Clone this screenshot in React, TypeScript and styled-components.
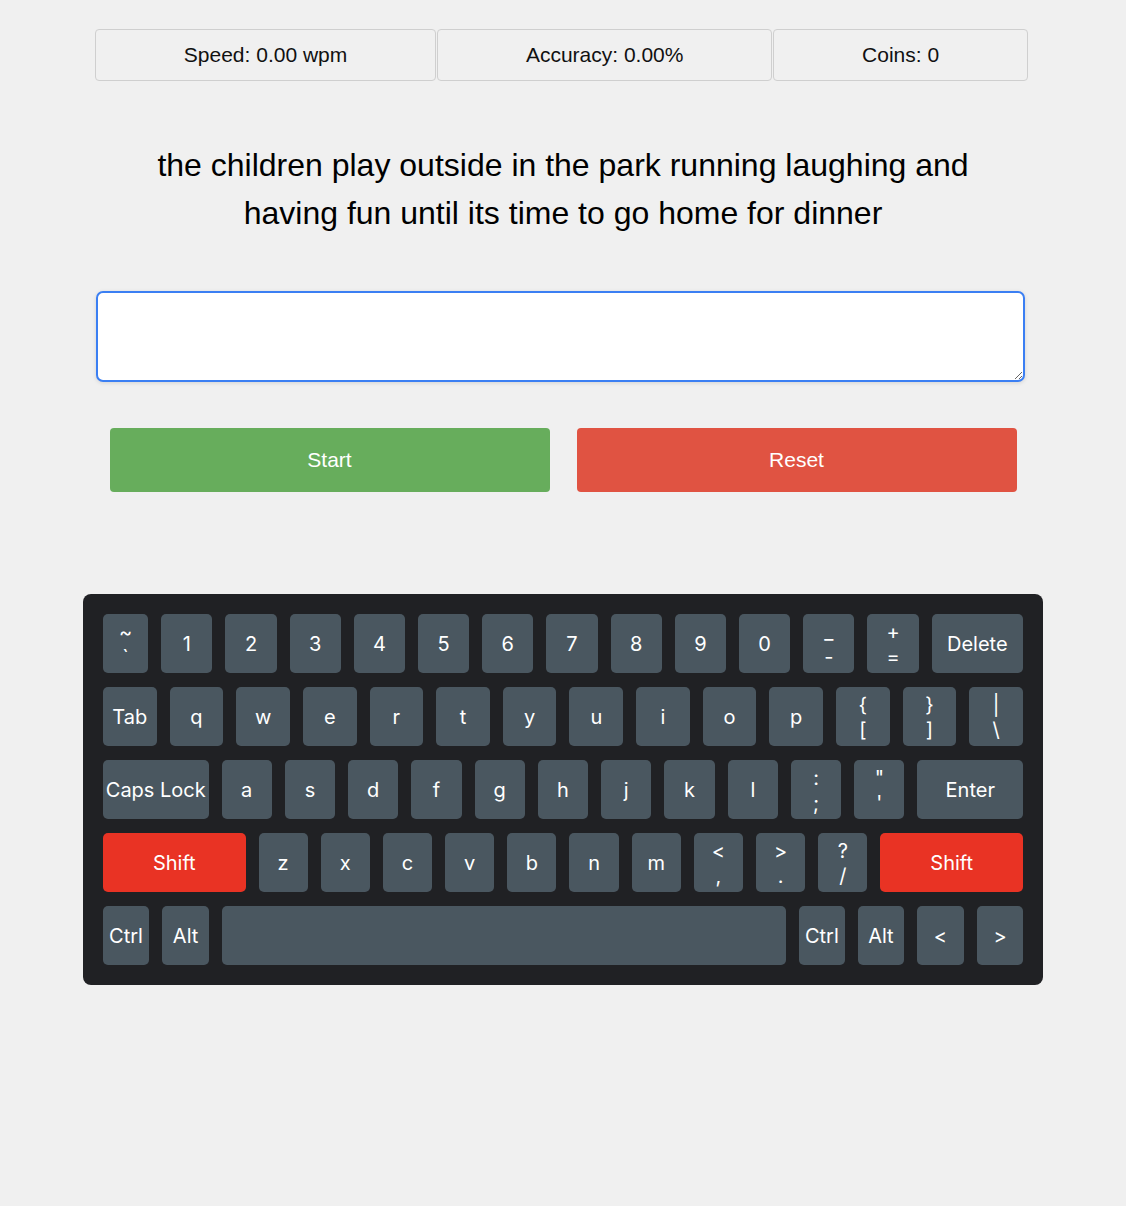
import React from "react";
import styled, { createGlobalStyle } from "styled-components";

const GlobalStyle = createGlobalStyle`
  html, body {
    margin: 0;
    padding: 0;
    background: #f0f0f0;
  }
  body {
    font-family: "Liberation Sans", Arial, sans-serif;
    color: #000;
  }
  * { box-sizing: border-box; }
`;

const Page = styled.div`
  min-height: 100vh;
  background: #f0f0f0;
  padding-top: 29px;
`;

const Main = styled.main`
  width: 936px;
  margin: 0 auto;
  display: flex;
  flex-direction: column;
`;

const StatsRow = styled.div`
  display: flex;
  gap: 1px;
  width: 933px;
`;

const StatBox = styled.div`
  flex: 1 1 auto;
  padding: 14px 20px;
  border: 1px solid #cfcfcf;
  border-radius: 4px;
  text-align: center;
  font-size: 21px;
  line-height: 22px;
  color: #111;
`;

const Sentence = styled.p`
  margin: 60px 0 0;
  padding: 0 20px;
  text-align: center;
  font-size: 32px;
  line-height: 48px;
  color: #000;
`;

const TypingArea = styled.textarea`
  display: block;
  margin: 54px 0 0 1px;
  width: 929px;
  height: 91px;
  border: 2px solid #3b7ff3;
  border-radius: 7px;
  background: #fff;
  box-shadow: 0 1px 4px rgba(0, 0, 0, 0.12);
  outline: none;
  padding: 8px;
  font-family: "Liberation Sans", Arial, sans-serif;
  font-size: 18px;
`;

const ButtonRow = styled.div`
  display: flex;
  gap: 27px;
  width: 907px;
  margin: 46px auto 0;
`;

const ActionButton = styled.button<{ $tone: "start" | "reset" }>`
  flex: 1;
  height: 64px;
  border: none;
  border-radius: 4px;
  background: ${(p) => (p.$tone === "start" ? "#67ad5c" : "#e05342")};
  color: #fff;
  font-family: "Liberation Sans", Arial, sans-serif;
  font-size: 21px;
  cursor: pointer;
`;

const Keyboard = styled.div`
  width: 960px;
  margin: 102px auto 0;
  padding: 20px;
  background: #202124;
  border-radius: 8px;
  display: flex;
  flex-direction: column;
  gap: 14px;
`;

const KeyRow = styled.div`
  display: flex;
  gap: 13px;
`;

const Key = styled.div<{ $grow: number; $accent?: boolean }>`
  flex: ${(p) => p.$grow} 1 0;
  min-width: 0;
  height: 59px;
  border-radius: 5px;
  background: ${(p) => (p.$accent ? "#e93324" : "#4a5760")};
  color: #fff;
  font-family: Inter, "Noto Sans", sans-serif;
  font-size: 20px;
  display: flex;
  flex-direction: column;
  align-items: center;
  justify-content: center;
  padding-top: 2px;
  white-space: nowrap;
`;

const KeyLine = styled.span`
  line-height: 25px;
`;

type KeyDef = { top?: string; label: string; grow: number; accent?: boolean };

const rows: KeyDef[][] = [
  [
    { top: "~", label: "`", grow: 45 },
    ...["1", "2", "3", "4", "5", "6", "7", "8", "9", "0"].map((l) => ({ label: l, grow: 51 })),
    { top: "_", label: "-", grow: 51 },
    { top: "+", label: "=", grow: 51 },
    { label: "Delete", grow: 91 },
  ],
  [
    { label: "Tab", grow: 53 },
    ...["q", "w", "e", "r", "t", "y", "u", "i", "o", "p"].map((l) => ({ label: l, grow: 53 })),
    { top: "{", label: "[", grow: 53 },
    { top: "}", label: "]", grow: 53 },
    { top: "|", label: "\\", grow: 53 },
  ],
  [
    { label: "Caps Lock", grow: 105 },
    ...["a", "s", "d", "f", "g", "h", "j", "k", "l"].map((l) => ({ label: l, grow: 50 })),
    { top: ":", label: ";", grow: 50 },
    { top: "\"", label: "'", grow: 50 },
    { label: "Enter", grow: 105 },
  ],
  [
    { label: "Shift", grow: 142, accent: true },
    ...["z", "x", "c", "v", "b", "n", "m"].map((l) => ({ label: l, grow: 49 })),
    { top: "<", label: ",", grow: 49 },
    { top: ">", label: ".", grow: 49 },
    { top: "?", label: "/", grow: 49 },
    { label: "Shift", grow: 142, accent: true },
  ],
  [
    { label: "Ctrl", grow: 46 },
    { label: "Alt", grow: 47 },
    { label: "", grow: 563 },
    { label: "Ctrl", grow: 46 },
    { label: "Alt", grow: 46 },
    { label: "<", grow: 47 },
    { label: ">", grow: 46 },
  ],
];

export default function App() {
  return (
    <Page>
      <GlobalStyle />
      <Main>
        <StatsRow>
          <StatBox>Speed: 0.00 wpm</StatBox>
          <StatBox>Accuracy: 0.00%</StatBox>
          <StatBox>Coins: 0</StatBox>
        </StatsRow>
        <Sentence>
          the children play outside in the park running laughing and having fun until its time to go home for dinner
        </Sentence>
        <TypingArea autoFocus />
        <ButtonRow>
          <ActionButton $tone="start">Start</ActionButton>
          <ActionButton $tone="reset">Reset</ActionButton>
        </ButtonRow>
      </Main>
      <Keyboard>
        {rows.map((row, ri) => (
          <KeyRow key={ri}>
            {row.map((k, ki) => (
              <Key key={ki} $grow={k.grow} $accent={k.accent}>
                {k.top !== undefined && <KeyLine>{k.top}</KeyLine>}
                <KeyLine>{k.label}</KeyLine>
              </Key>
            ))}
          </KeyRow>
        ))}
      </Keyboard>
    </Page>
  );
}
